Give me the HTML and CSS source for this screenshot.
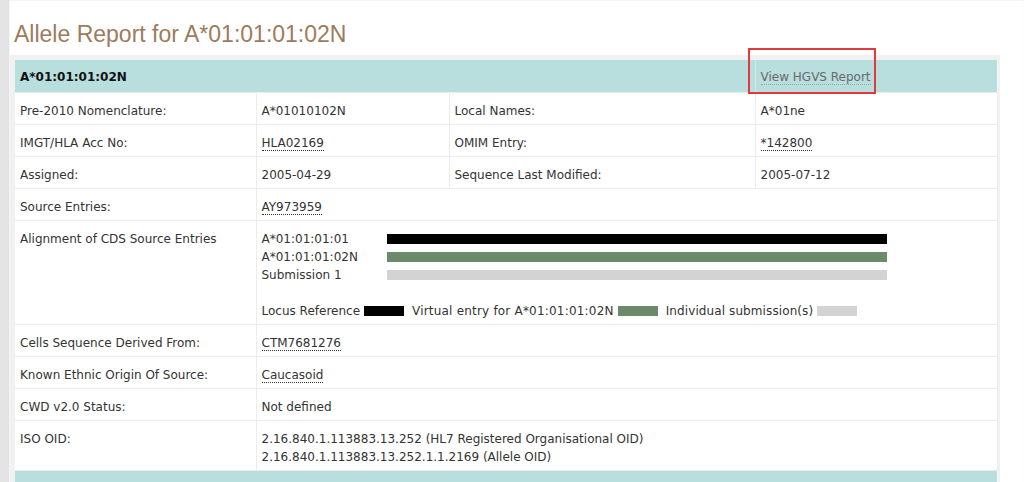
FILE: index.html
```html
<!DOCTYPE html>
<html>
<head>
<meta charset="utf-8">
<link rel="stylesheet" href="styles.css">
</head>
<body>
<div class="page">
  <h1 class="title">Allele Report for A*01:01:01:02N</h1>
  <div class="frame">
    <table class="report">
      <colgroup>
        <col class="c1"><col class="c2"><col class="c3"><col class="c4">
      </colgroup>
      <thead>
        <tr class="head">
          <th colspan="3" class="allele">A*01:01:01:02N</th>
          <th class="hgvs"><a class="hgvs-link">View HGVS Report</a></th>
        </tr>
      </thead>
      <tbody>
        <tr>
          <td>Pre-2010 Nomenclature:</td>
          <td>A*01010102N</td>
          <td>Local Names:</td>
          <td>A*01ne</td>
        </tr>
        <tr>
          <td>IMGT/HLA Acc No:</td>
          <td><a class="lnk">HLA02169</a></td>
          <td>OMIM Entry:</td>
          <td><a class="lnk">*142800</a></td>
        </tr>
        <tr>
          <td>Assigned:</td>
          <td>2005-04-29</td>
          <td>Sequence Last Modified:</td>
          <td>2005-07-12</td>
        </tr>
        <tr>
          <td>Source Entries:</td>
          <td colspan="3"><a class="lnk">AY973959</a></td>
        </tr>
        <tr>
          <td>Alignment of CDS Source Entries</td>
          <td colspan="3">
            <div class="align">
              <span>A*01:01:01:01</span><span class="bar black"></span>
              <span>A*01:01:01:02N</span><span class="bar green"></span>
              <span>Submission 1</span><span class="bar grey"></span>
            </div>
            <div class="legend">
              <span>Locus Reference</span><span class="key black"></span>
              <span class="wide">Virtual entry for A*01:01:01:02N</span><span class="key green"></span>
              <span class="wide-s">Individual submission(s)</span><span class="key grey"></span>
            </div>
          </td>
        </tr>
        <tr>
          <td>Cells Sequence Derived From:</td>
          <td colspan="3"><a class="lnk">CTM7681276</a></td>
        </tr>
        <tr>
          <td>Known Ethnic Origin Of Source:</td>
          <td colspan="3"><a class="lnk">Caucasoid</a></td>
        </tr>
        <tr>
          <td>CWD v2.0 Status:</td>
          <td colspan="3">Not defined</td>
        </tr>
        <tr>
          <td>ISO OID:</td>
          <td colspan="3">2.16.840.1.113883.13.252 (HL7 Registered Organisational OID)<br>2.16.840.1.113883.13.252.1.1.2169 (Allele OID)</td>
        </tr>
      </tbody>
      <tfoot>
        <tr class="foot"><td colspan="4"></td></tr>
      </tfoot>
    </table>
    <div class="highlight"></div>
  </div>
</div>
</body>
</html>
```
FILE: styles.css
```css
html, body {
  margin: 0;
  padding: 0;
  background: #ffffff;
}
body {
  font-family: "DejaVu Sans", Verdana, sans-serif;
  font-size: 12px;
  color: #333333;
  height: 482px;
  overflow: hidden;
}
.page {
  border-left: 8px solid #e4e4e4;
  box-shadow: inset 1px 0 2px #d8d8d8;
  min-height: 482px;
  padding-left: 2px;
}
.title {
  margin: 0;
  padding: 20px 0 0 4px;
  height: 35px;
  font-family: "Liberation Sans", Arial, sans-serif;
  font-weight: normal;
  font-size: 23px;
  color: #9c7c5c;
  line-height: 28px;
}
.frame {
  position: relative;
  width: 990px;
  background: #f1f1f1;
  padding: 5px 0 0 5px;
  box-sizing: border-box;
}
.report {
  border-collapse: collapse;
  width: 982px;
  table-layout: fixed;
  background: #ffffff;
}
.c1 { width: 241px; }
.c2 { width: 193px; }
.c3 { width: 306px; }
.c4 { width: 242px; }
.head th {
  background: #b8dedd;
  height: 32px;
  padding: 3px 5px 0 5px;
  text-align: left;
  line-height: 18px;
  box-sizing: border-box;
}
.allele {
  font-weight: bold;
  color: #111111;
}
.head .hgvs {
  border-left: 1px solid #cfe9e8;
  font-weight: normal;
}
.hgvs-link {
  color: #6a6a6a;
  border-bottom: 1px dotted #8aa;
}
.report td {
  padding: 9px 5px 4px 5px;
  line-height: 18px;
  border: 1px solid #ececec;
  vertical-align: top;
  white-space: nowrap;
}
.report td:first-child { border-left: 0; }
.lnk {
  color: #333333;
  border-bottom: 1px dotted #333333;
}
.align {
  display: grid;
  grid-template-columns: 125px 500px;
  line-height: 18px;
}
.bar {
  align-self: center;
  height: 10px;
}
.black { background: #000000; }
.green { background: #6a8a6a; }
.grey { background: #d3d3d3; }
.legend {
  margin-top: 18px;
  display: flex;
  align-items: center;
  line-height: 18px;
}
.wide { letter-spacing: 0.2px; }
.wide-s { letter-spacing: 0.1px; }
.key {
  display: inline-block;
  width: 40px;
  height: 10px;
  margin: 0 8px 0 4px;
}
.foot td {
  background: #b8dedd;
  height: 30px;
  padding: 0;
  border: 0;
}
.highlight {
  position: absolute;
  left: 738px;
  top: -7px;
  width: 124px;
  height: 42px;
  border: 2px solid #e0393e;
}
```
